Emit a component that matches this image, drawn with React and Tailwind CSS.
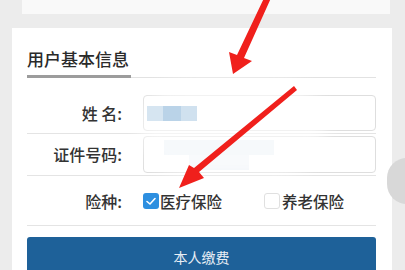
import React from "react";

const font = { fontFamily: '"Noto Sans CJK SC", "Noto Sans", sans-serif' };

function Check() {
  return (
    <span className="flex h-[16px] w-[16px] items-center justify-center rounded-[3px] bg-[#2d8fe0]">
      <svg width="12" height="12" viewBox="0 0 12 12">
        <path d="M2 6.5 L5 9 L10 3.5" fill="none" stroke="white" strokeWidth="1.6" strokeLinecap="round" strokeLinejoin="round" />
      </svg>
    </span>
  );
}

export default function App() {
  return (
    <div className="relative h-[270px] w-[405px] overflow-hidden bg-[#ececec]" style={font}>
      <div className="ml-[22px] h-[14px] w-[368px] bg-[#f9f9f9]" />
      <div className="ml-[12px] mt-[14px] w-[380px] bg-white pl-[15px] pr-[16px] pt-[19px]">
        <div className="flex items-end">
          <div className="border-b-[3px] border-[#9c9c9c] pb-[5px] pr-[2px] text-[17px] font-medium leading-[23px] text-[#2a2a2a]">用户基本信息</div>
          <div className="flex-1 border-b border-[#e2e2e2]" />
        </div>
        <div className="mt-[17px] flex h-[39px] items-start border-b border-[#e4e4e4]">
          <div className="w-[95px] pt-[8px] text-right text-[16px] font-medium leading-[20px] text-[#333]">姓&nbsp;名:</div>
          <div className="ml-[21px] flex h-[36px] flex-1 items-center rounded-[4px] border border-[#dedede] pl-[3px]">
            <div className="relative z-10 flex h-[15px]">
              <div className="w-[16px] bg-[#d6e5f1]" />
              <div className="w-[18px] bg-[#bad3e8]" />
              <div className="w-[16px] bg-[#d0e1ef]" />
            </div>
          </div>
        </div>
        <div className="flex h-[42px] items-start border-b border-[#e4e4e4] pt-[2px]">
          <div className="w-[95px] pt-[8px] text-right text-[16px] font-medium leading-[20px] text-[#333]">证件号码:</div>
          <div className="ml-[21px] flex h-[37px] flex-1 items-center rounded-[4px] border border-[#dedede]">
            <div className="ml-[20px] flex h-[30px] w-[110px] flex-col">
              <div className="h-[15px] bg-[#e9f0f6]" />
              <div className="ml-[25px] h-[15px] w-[60px] bg-[#eef3f8]" />
            </div>
          </div>
        </div>
        <div className="flex h-[50px] items-center border-b border-[#e4e4e4]">
          <div className="w-[95px] text-right text-[16px] font-medium leading-[20px] text-[#333]">险种:</div>
          <div className="ml-[21px] flex w-[121px] items-center">
            <Check />
            <span className="ml-[1px] text-[15.5px] font-medium leading-[20px] text-[#333]">医疗保险</span>
          </div>
          <div className="flex items-center">
            <span className="h-[16px] w-[16px] rounded-[3px] border border-[#e0e0e0] bg-white" />
            <span className="ml-[2px] text-[15.5px] font-medium leading-[20px] text-[#333]">养老保险</span>
          </div>
        </div>
        <div className="mt-[11px] flex h-[40px] items-center justify-center rounded-t-[3px] bg-[#1e6199] text-[14px] text-[#e8eef5]">
          本人缴费
        </div>
      </div>

      <div className="absolute left-[140px] top-[80px] h-[95px] w-[185px] rounded-full bg-white opacity-60 blur-[8px]" />
      <div className="absolute left-[387px] top-[158px] h-[46px] w-[40px] rounded-full bg-[#d8d8d8]" />

      <svg className="absolute left-0 top-0" width="405" height="270" viewBox="0 0 405 270">
        <path d="M265 -4 L271 -2 L244 58 L252 61 L233 74 L229 52 L237 55 Z" fill="#f0201c" />
        <path d="M294 86 L297 90 L199 172 L204 178 L179 188 L189 165 L194 168 Z" fill="#f0201c" />
      </svg>
    </div>
  );
}
